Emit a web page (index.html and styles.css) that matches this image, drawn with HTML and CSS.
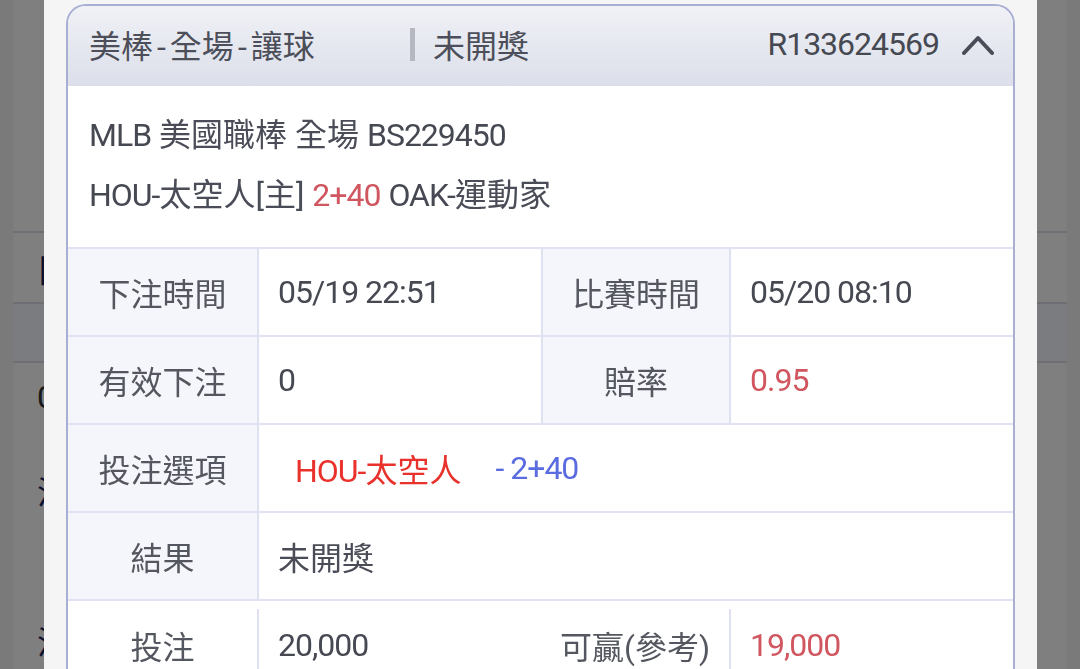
FILE: index.html
```html
<!DOCTYPE html>
<html lang="zh-Hant">
<head>
<meta charset="utf-8">
<title>注單詳情</title>
<link rel="stylesheet" href="styles.css">
</head>
<body>
<div class="page">
  <div class="bg-row bg-head">目</div>
  <div class="bg-row bg-tint"></div>
  <div class="bg-text bg-num">0</div>
  <div class="bg-text bg-note">注</div>
  <div class="bg-text bg-note2">注</div>
</div>

<div class="overlay">
  <div class="sheet">
    <div class="card">
      <div class="card-head">
        <div class="head-title">美棒<span class="num">-</span>全場<span class="num">-</span>讓球</div>
        <div class="head-bar"></div>
        <div class="head-status">未開獎</div>
        <div class="head-id num">R133624569</div>
        <svg class="chev" width="32" height="22" viewBox="0 0 32 22"><polyline points="2,19 16,4 30,19" fill="none" stroke="#4a4d57" stroke-width="4" stroke-linecap="round" stroke-linejoin="round"/></svg>
      </div>
      <div class="info">
        <div class="info-line"><span class="num">MLB</span> 美國職棒 全場 <span class="num">BS229450</span></div>
        <div class="info-line"><span class="num">HOU-</span>太空人[主] <span class="num red">2+40</span> <span class="num">OAK-</span>運動家</div>
      </div>
      <div class="grid">
        <div class="cell lbl">下注時間</div>
        <div class="cell val bl"><span class="num">05/19 22:51</span></div>
        <div class="cell lbl bl">比賽時間</div>
        <div class="cell val bl"><span class="num">05/20 08:10</span></div>

        <div class="cell lbl">有效下注</div>
        <div class="cell val bl"><span class="num">0</span></div>
        <div class="cell lbl bl">賠率</div>
        <div class="cell val bl"><span class="num red">0.95</span></div>

        <div class="cell lbl">投注選項</div>
        <div class="cell val bl span3"><span class="pick"><span class="num">HOU-</span>太空人</span><span class="hcp num">- 2+40</span></div>

        <div class="cell lbl">結果</div>
        <div class="cell val bl span3">未開獎</div>
      </div>
      <div class="grid grid-last">
        <div class="cell2 lbl2">投注</div>
        <div class="cell2 val bl"><span class="num">20,000</span></div>
        <div class="cell2 lbl2">可贏(參考)</div>
        <div class="cell2 val bl"><span class="num red">19,000</span></div>
      </div>
    </div>
  </div>
</div>
</body>
</html>
```

FILE: styles.css
```css
* {
  box-sizing: border-box;
  margin: 0;
  padding: 0;
}

html, body {
  width: 1080px;
  height: 669px;
  overflow: hidden;
}

body {
  background: #f4f4f4;
  font-family: Roboto, "Noto Sans CJK TC", sans-serif;
  font-size: 32px;
  color: #4a4d57;
}

/* background page (dimmed by overlay) */
.page {
  margin: 0 13px;
  height: 669px;
  background: #ffffff;
  padding-top: 231px;
}

.bg-row {
  border-top: 2px solid #dcdde8;
  padding-left: 24px;
  display: flex;
  align-items: center;
}

.bg-head {
  height: 71px;
  font-weight: 700;
  color: #1a2260;
}

.bg-tint {
  height: 61px;
  background: #f6f8ff;
  border-bottom: 2px solid #dcdde8;
}

.bg-text {
  padding-left: 24px;
  line-height: 40px;
}

.bg-num {
  margin-top: 14px;
  color: #333333;
}

.bg-note {
  margin-top: 56px;
  color: #1a2260;
}

.bg-note2 {
  margin-top: 110px;
  color: #1a2260;
}

/* overlay */
.overlay {
  position: fixed;
  inset: 0;
  background: rgba(0, 0, 0, 0.5);
}

.sheet {
  position: absolute;
  left: 44px;
  top: 0;
  width: 993px;
  bottom: 0;
  background: #f5f5f6;
  padding: 4px 22px 0 22px;
}

.card {
  border: 2px solid #a9aed3;
  border-bottom: none;
  border-radius: 20px 20px 0 0;
  overflow: hidden;
  background: #ffffff;
  height: 700px;
}

.num {
  letter-spacing: -1px;
  color: #464952;
}

.num.red {
  color: #d0565f;
}

.card-head {
  height: 80px;
  background: linear-gradient(#f0f1f6, #dcdfea);
  display: flex;
  align-items: center;
  padding: 0 19px 4px 21px;
  color: #4c4f59;
}

.head-title {
  width: 321px;
}

.head-title .num {
  letter-spacing: 0;
  padding: 0 4px;
  color: #4c4f59;
}

.head-bar {
  width: 5px;
  height: 33px;
  background: #b6b8c1;
  margin-right: 18px;
}

.head-status {
  flex: 1;
}

.head-id {
  margin-right: 23px;
}

.chev {
  display: block;
  margin-top: 2px;
}

.info {
  padding: 19px 21px 22px;
}

.info-line {
  line-height: 60px;
  white-space: nowrap;
}

.red {
  color: #d0565f;
}

.grid {
  display: grid;
  grid-template-columns: 189px 284px 188px 1fr;
  border-top: 2px solid #e0e2f3;
}

.cell {
  height: 88px;
  border-bottom: 2px solid #e0e2f3;
  display: flex;
  align-items: center;
  white-space: nowrap;
}

.bl {
  border-left: 2px solid #e0e2f3;
}

.lbl {
  background: #f5f6fb;
  justify-content: center;
  color: #54575f;
}

.val {
  padding-left: 19px;
}

.span3 {
  grid-column: span 3;
}

.pick {
  color: #e8322b;
  margin-left: 17px;
}

.pick .num {
  color: #e8322b;
}

.hcp.num {
  color: #5a6ce0;
  margin-left: 34px;
}

.grid-last {
  border-top: none;
  padding-top: 8px;
}

.cell2 {
  height: 72px;
  display: flex;
  align-items: center;
  white-space: nowrap;
}

.lbl2 {
  justify-content: center;
  color: #54575f;
}
```
